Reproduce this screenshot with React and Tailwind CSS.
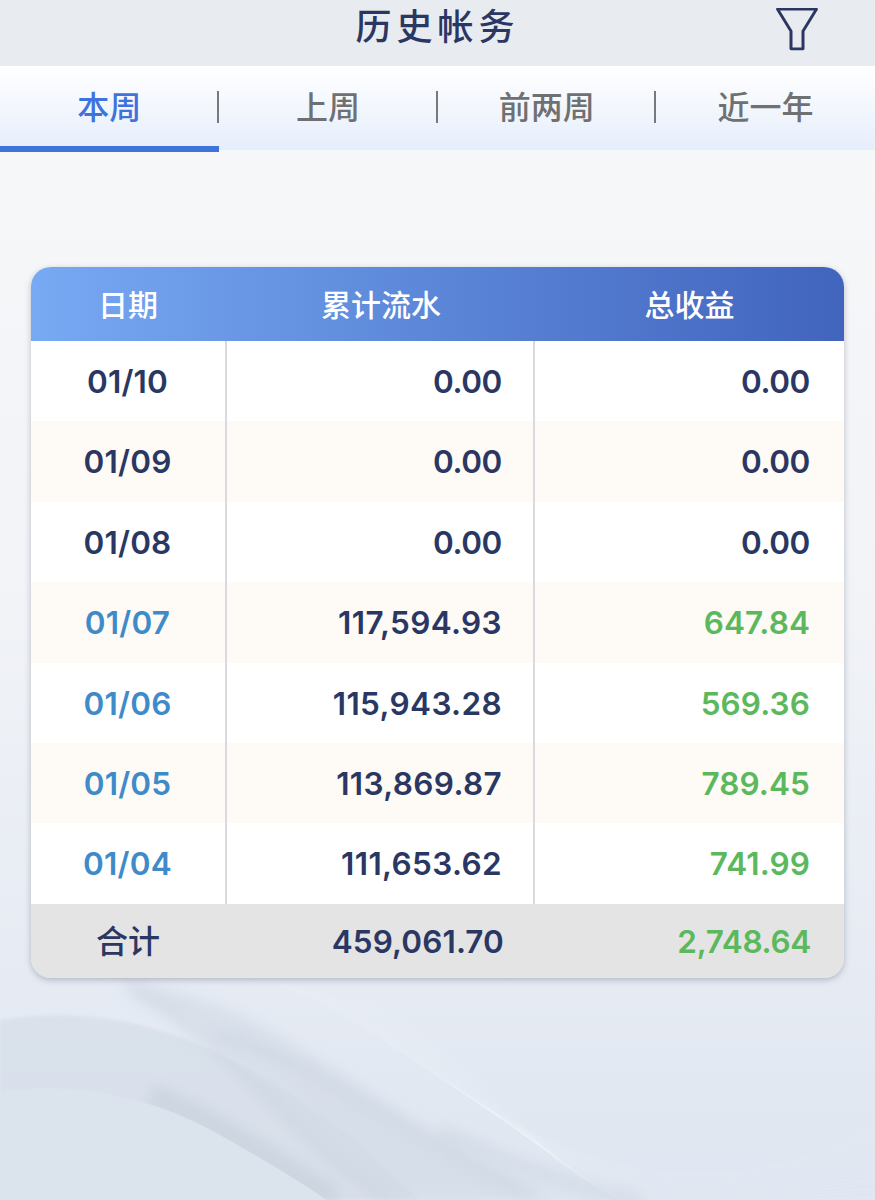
import React from 'react';

const FONT = '[font-family:Inter,"Noto_Sans_CJK_SC",sans-serif]';

const tabs = ['本周', '上周', '前两周', '近一年'];

const rows = [
  { date: '01/10', flow: '0.00', profit: '0.00' },
  { date: '01/09', flow: '0.00', profit: '0.00' },
  { date: '01/08', flow: '0.00', profit: '0.00' },
  { date: '01/07', flow: '117,594.93', profit: '647.84', active: true },
  { date: '01/06', flow: '115,943.28', profit: '569.36', active: true },
  { date: '01/05', flow: '113,869.87', profit: '789.45', active: true },
  { date: '01/04', flow: '111,653.62', profit: '741.99', active: true },
];

const lines = Array.from({ length: 22 }, (_, i) => i * 5);

// Soft wave artwork behind the lower part of the page
const Waves = () => (
  <svg className="absolute left-0 top-[960px] w-[875px] h-[240px]" viewBox="0 0 875 240" fill="none">
    <defs>
      <filter id="soft" x="-20%" y="-20%" width="140%" height="140%">
        <feGaussianBlur stdDeviation="7" />
      </filter>
      <filter id="softer" x="-20%" y="-20%" width="140%" height="140%">
        <feGaussianBlur stdDeviation="1.5" />
      </filter>
    </defs>
    <path d="M0 60C60 50 130 55 200 85C300 130 370 190 420 240L0 240Z" fill="#d4dce7" opacity="0.6" filter="url(#softer)" />
    <path d="M110 22C190 50 250 110 300 160C330 190 370 220 400 240L560 240C450 190 340 110 270 70C210 38 160 25 110 22Z" fill="#d0d9e4" opacity="0.6" filter="url(#soft)" />
    <path d="M130 28C190 60 240 110 290 160C320 190 360 220 390 240" stroke="#bfc9d6" strokeWidth="10" opacity="0.4" filter="url(#soft)" />
    <path d="M150 135C220 165 280 205 335 240" stroke="#bac5d2" strokeWidth="24" opacity="0.4" filter="url(#soft)" />
    <path d="M0 133C60 122 140 130 220 175C260 197 300 222 327 240L0 240Z" fill="#dbe3ed" />
    <path d="M215 75C320 100 400 175 530 235" stroke="#c2ccd9" strokeWidth="8" opacity="0.4" filter="url(#soft)" />
    <path d="M440 170C500 200 560 225 640 240" stroke="#c5cfdb" strokeWidth="14" opacity="0.45" filter="url(#soft)" />
    {lines.map((d) => (
      <path
        key={d}
        d={`M${280 + d} ${25 + d * 0.2}C${400 + d} ${70 + d * 0.5} ${470 + d * 0.7} ${165 + d * 0.6} ${620 + d * 0.5} ${205 + d * 0.5}C720 ${228 + d * 0.2} 810 ${205 + d * 0.4} 875 ${165 + d * 0.9}`}
        stroke="#ffffff"
        strokeOpacity="0.1"
      />
    ))}
  </svg>
);

const FilterIcon = () => (
  <svg width="44" height="44" viewBox="0 0 44 44" fill="none" stroke="#2b3763" strokeWidth="3">
    <path d="M2.5 2.5H41.5L28 27V47H16V27Z" transform="scale(1 0.89)" strokeLinejoin="round" />
  </svg>
);

const Row = ({ row, index }) => {
  const stripe = index % 2 === 1 ? 'bg-[#fefaf5]' : 'bg-white';
  return (
    <div className={`grid grid-cols-[196px_308px_1fr] h-[80.4px] ${stripe}`}>
      <div className={`flex items-center justify-center pt-[1px] pr-[1px] border-r-2 border-[#d9dade] tracking-[0.2px] ${row.active ? 'text-[#3f8bca]' : 'text-[#2b3763]'}`}>
        {row.date}
      </div>
      <div className={`flex items-center justify-end pt-[1px] pr-[31px] border-r-2 border-[#d9dade] text-[#2b3763] ${row.active ? 'tracking-[0.35px]' : 'tracking-[-0.4px]'}`}>
        {row.flow}
      </div>
      <div className={`flex items-center justify-end pt-[1px] pr-[34px] ${row.active ? 'tracking-[0.1px] text-[#5cb85c]' : 'tracking-[-0.4px] text-[#2b3763]'}`}>
        {row.profit}
      </div>
    </div>
  );
};

export default function App() {
  return (
    <div className={`relative w-[875px] h-[1200px] overflow-hidden bg-gradient-to-b from-[#f8f9fa] via-[#f1f3f7] to-[#dfe6f1] ${FONT}`}>
      <Waves />

      <div className="relative">
        <div className="flex h-[66px] items-center justify-center bg-[#e8ebef]">
          <h1 className="pb-[12px] text-[36px] font-medium tracking-[5px] text-[#2b3763]">历史帐务</h1>
          <div className="absolute right-[56px] top-[7px]">
            <FilterIcon />
          </div>
        </div>

        <div className="grid h-[84px] grid-cols-4 bg-gradient-to-b from-white to-[#e6eefb]">
          {tabs.map((tab, i) => (
            <div key={tab} className="relative flex items-center justify-center pb-[1px] text-[32px] font-medium">
              <span className={i === 0 ? 'text-[#3f73dc]' : 'text-[#6f7072]'}>{tab}</span>
              {i < 3 && <span className="absolute right-[0px] top-[25px] h-[32px] w-[2px] bg-[#77797c]" />}
              {i === 0 && <span className="absolute -bottom-[2px] left-0 right-0 h-[6px] bg-[#3f73dc]" />}
            </div>
          ))}
        </div>

        <div className="mx-[31px] mt-[117px] overflow-hidden rounded-[20px] text-[31.5px] font-[580] shadow-[0_2px_6px_rgba(80,90,110,0.35)]">
          <div className="grid h-[74px] grid-cols-[196px_308px_1fr] items-center bg-gradient-to-r from-[#78a9f3] to-[#4164bd] pt-[3px] text-center text-[30px] font-medium text-white">
            <div className="pr-[2px]">日期</div>
            <div>累计流水</div>
            <div>总收益</div>
          </div>
          {rows.map((row, i) => (
            <Row key={row.date} row={row} index={i} />
          ))}
          <div className="grid h-[74px] grid-cols-[196px_308px_1fr] items-center bg-[#e4e4e4] pt-[2px] text-[#2b3763]">
            <div className="pr-[2px] text-center text-[32px] font-medium">合计</div>
            <div className="pr-[31px] text-right tracking-[0.1px]">459,061.70</div>
            <div className="pr-[33px] text-right tracking-[-0.3px] text-[#5cb85c]">2,748.64</div>
          </div>
        </div>
      </div>
    </div>
  );
}
